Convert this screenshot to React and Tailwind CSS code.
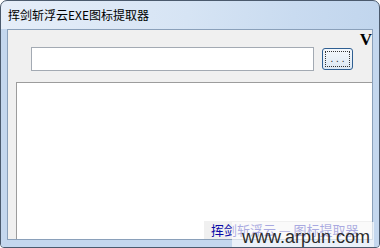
import React from 'react';

const cjk = { fontFamily: '"Noto Sans CJK SC", "Liberation Sans", sans-serif' };

const App = () => {
    return (
        <div className="w-[380px] h-[248px] bg-white overflow-hidden">
            {/* window */}
            <div className="relative w-[380px] h-[248px] flex flex-col border border-[#4b5a6d] rounded-t-[7px] rounded-b-[4px] bg-[linear-gradient(100deg,#e6eef9_0%,#d6e4f4_45%,#c9dbf0_70%,#bdd3ec_100%)] overflow-hidden">
                {/* title */}
                <div className="h-[28px] flex items-center pl-[7px] text-[12px] text-black" style={cjk}>
                    挥剑斩浮云EXE图标提取器
                </div>

                {/* frame body */}
                <div className="flex-1 flex px-[6px] pb-[7px] bg-[#c4d7ee]">
                    <div className="flex-1 flex flex-col border border-[#8aa0ba] bg-[#f0f0f0]">
                        {/* top row */}
                        <div className="relative flex items-start pt-[17px] pl-[23px]">
                            <div className="w-[283px] h-[24px] border border-[#a3aab3] bg-white"></div>
                            <button className="ml-[8px] mt-[1px] w-[31px] h-[22px] rounded-[3px] border border-[#2f5f92] bg-[linear-gradient(#f4f8fc,#dde8f3)] p-[2px] flex">
                                <span className="flex-1 border border-dotted border-[#333] flex items-center justify-center text-[10px] leading-none text-[#222]" style={{ fontFamily: '"Liberation Sans", sans-serif' }}>
                                    . . .
                                </span>
                            </button>
                            <span className="absolute right-[0px] top-[1px] text-[17px] font-bold leading-none text-black" style={{ fontFamily: '"Liberation Serif", serif' }}>
                                V
                            </span>
                        </div>

                        {/* list */}
                        <div className="relative flex-1 mt-[11px] ml-[8px] border-t border-l border-[#9c9c9c] bg-white flex flex-col justify-end items-end">
                            <div className="w-[168px] h-[18px] bg-[#f0f0f0] flex items-center pl-[7px] text-[13px] text-[#0a0aa8]" style={cjk}>
                                挥剑斩浮云 — 图标提取器
                            </div>
                        </div>
                    </div>
                </div>

                {/* watermark */}
                <div className="absolute left-[231px] top-[221px] w-[142px] h-[27px] bg-white/65 flex items-end pl-[10px]">
                    <span className="text-[18px] leading-[23px] text-[#2b2b2b]" style={{ fontFamily: '"Liberation Sans", Arial, sans-serif' }}>
                        www.arpun.com
                    </span>
                </div>
            </div>
        </div>
    );
};

export default App;
